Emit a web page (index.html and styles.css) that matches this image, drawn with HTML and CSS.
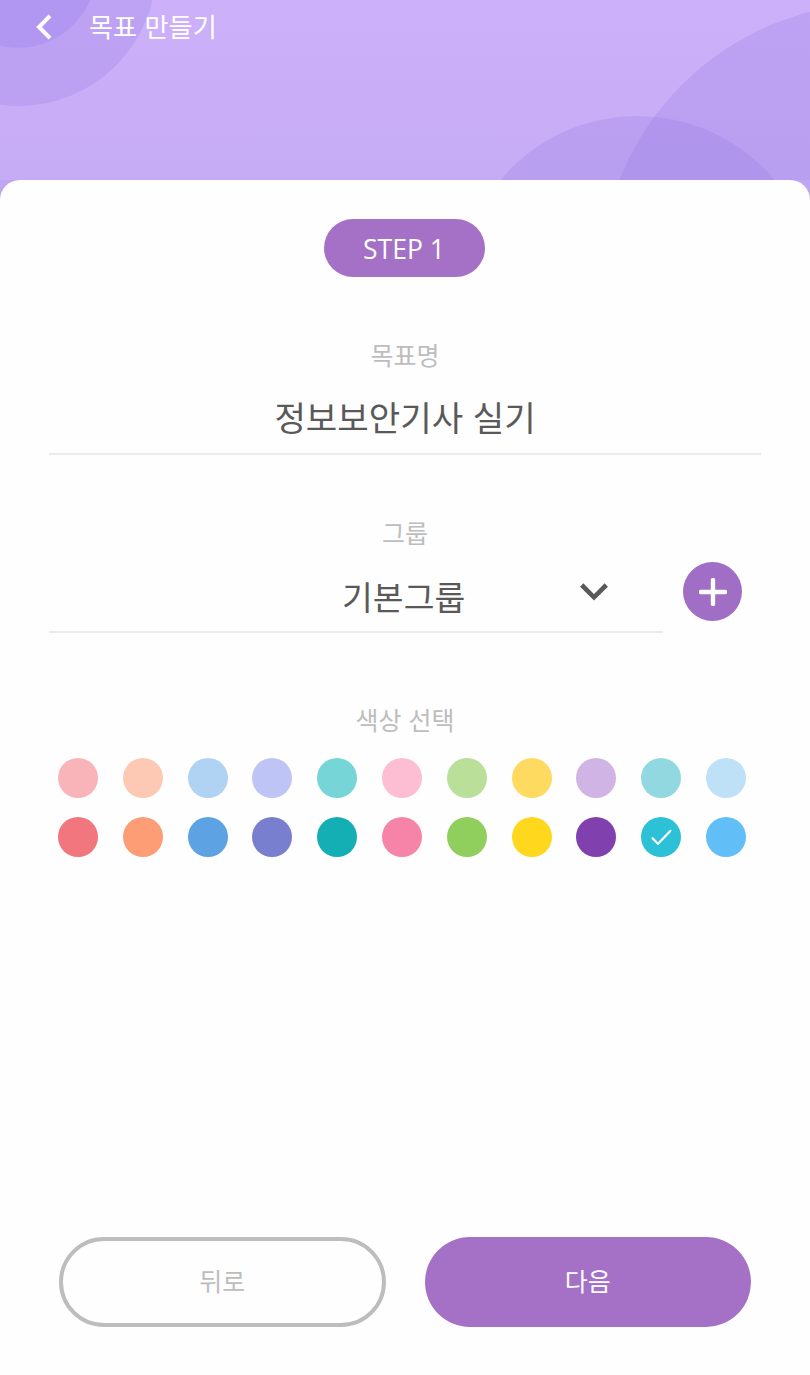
FILE: index.html
```html
<!DOCTYPE html>
<html lang="ko">
<head>
<meta charset="utf-8">
<title>목표 만들기</title>
<link rel="stylesheet" href="styles.css">
</head>
<body>
<div class="app">
  <svg class="backdrop" viewBox="0 0 810 210" aria-hidden="true">
    <defs>
      <linearGradient id="sky" x1="0" y1="0" x2="0" y2="1"><stop offset="0" stop-color="#ccb1fa"/><stop offset="1" stop-color="#c5abf4"/></linearGradient>
    </defs>
    <rect width="810" height="210" fill="url(#sky)"/>
    <g fill="#9173e0" fill-opacity=".24">
      <circle cx="18.5" cy="-31.7" r="137.7"/>
      <circle cx="18" cy="-30.8" r="78.5" fill="#987df0" fill-opacity=".31"/>
      <circle cx="879" cy="282.2" r="279"/>
      <circle cx="637.5" cy="294.6" r="178.6"/>
    </g>
    <rect y="180" width="810" height="30" fill="#c0a5f2"/>
  </svg>
  <header class="topbar">
    <svg class="back" viewBox="0 0 16 26"><path d="M14 1.8 3 13 14 24.2" fill="none" stroke="#fff" stroke-width="4"/></svg>
    <h1 class="title">목표 만들기</h1>
  </header>
  <main class="sheet">
    <div class="step"><span>STEP 1</span></div>
    <section class="field name">
      <div class="label">목표명</div>
      <div class="value">정보보안기사 실기</div>
    </section>
    <section class="group">
      <div class="label">그룹</div>
      <div class="group-row">
        <div class="select">
          <span class="group-name">기본그룹</span>
          <svg class="chevron" viewBox="0 0 28 18"><path d="m1.7 2 12.3 12.3L26.3 2" fill="none" stroke="#595959" stroke-width="4.6"/></svg>
        </div>
        <div class="add"><svg viewBox="0 0 28 28"><path d="M14 2v24M2 14h24" stroke="#fff" stroke-width="4.4" stroke-linecap="round"/></svg></div>
      </div>
    </section>
    <section class="colors">
      <div class="label">색상 선택</div>
      <div class="swatches">
        <i class="swatch" style="background:#f8b4b8"></i><i class="swatch" style="background:#fdc9b4"></i><i class="swatch" style="background:#b0d3f4"></i><i class="swatch" style="background:#bec4f6"></i><i class="swatch" style="background:#76d5d7"></i><i class="swatch" style="background:#fdbdd3"></i><i class="swatch" style="background:#b9df99"></i><i class="swatch" style="background:#ffda61"></i><i class="swatch" style="background:#d1b4e6"></i><i class="swatch" style="background:#92d8e1"></i><i class="swatch" style="background:#bfe1f7"></i>
        <i class="swatch" style="background:#f1767d"></i><i class="swatch" style="background:#fd9d75"></i><i class="swatch" style="background:#5da2e2"></i><i class="swatch" style="background:#787fcf"></i><i class="swatch" style="background:#14afb5"></i><i class="swatch" style="background:#f684a8"></i><i class="swatch" style="background:#90cf5e"></i><i class="swatch" style="background:#ffd71c"></i><i class="swatch" style="background:#8040ad"></i><i class="swatch" style="background:#2cc1d7"><svg viewBox="0 0 40 40"><path d="m11.5 21.2 5.5 5.6 12.3-12.9" fill="none" stroke="#fff" stroke-width="2.2" stroke-linecap="round" stroke-linejoin="round"/></svg></i><i class="swatch" style="background:#62bef6"></i>
      </div>
    </section>
    <footer class="actions">
      <div class="button outline">뒤로</div>
      <div class="button solid">다음</div>
    </footer>
  </main>
</div>
</body>
</html>
```
FILE: styles.css
```css
* { box-sizing: border-box; }
body {
  margin: 0;
  font-family: "Noto Sans CJK KR", sans-serif;
  font-weight: 400;
  background: #fefefe;
}
.app {
  position: relative;
  width: 810px;
  height: 1375px;
  display: flex;
  flex-direction: column;
  overflow: hidden;
}
.backdrop { position: absolute; left: 0; top: 0; width: 810px; height: 210px; }
.topbar {
  position: relative;
  height: 180px;
  padding: 7px 36px 0;
  display: flex;
  align-items: flex-start;
  gap: 37px;
}
.back { width: 16px; height: 26px; margin-top: 7px; }
.title { margin: 0; color: #fff; font-size: 26.2px; font-weight: 400; line-height: 38px; white-space: nowrap; }
.sheet {
  position: relative;
  flex: 1;
  display: flex;
  flex-direction: column;
  padding: 39px 49px 48px;
  background: #fefefe;
  border-radius: 20px 20px 0 0;
}
.step {
  align-self: center;
  width: 161px;
  height: 58px;
  margin-right: 2px;
  border-radius: 29px;
  background: #a471c7;
  color: #fff;
  font-family: "Open Sans", sans-serif;
  font-size: 26.5px;
  display: flex;
  align-items: center;
  justify-content: center;
}
.step span { padding-top: 2px; }
.label { color: #bdbdbd; font-size: 25px; line-height: 34px; text-align: center; }
.name { margin-top: 60px; border-bottom: 2px solid #ebebeb; height: 118px; }
.value { margin-top: 20px; color: #595959; font-size: 34.2px; line-height: 50px; text-align: center; }
.group { margin-top: 60px; }
.group-row { display: flex; gap: 20px; align-items: flex-start; }
.select {
  width: 614px;
  height: 84px;
  padding: 22px 55px 0 293px;
  border-bottom: 2px solid #ebebeb;
  display: flex;
  justify-content: space-between;
}
.group-name { color: #595959; font-size: 33.5px; line-height: 50px; }
.chevron { width: 28px; height: 18px; margin-top: 12px; }
.add {
  width: 59px;
  height: 59px;
  margin-top: 13px;
  border-radius: 50%;
  background: #a06ec4;
  display: grid;
  place-items: center;
}
.add svg { width: 28px; height: 28px; }
.colors { margin-top: 69px; }
.swatches {
  margin-top: 22px;
  padding: 0 15px 0 9px;
  display: grid;
  grid-template-columns: repeat(11, 40px);
  justify-content: space-between;
  row-gap: 19px;
}
.swatch { width: 40px; height: 40px; border-radius: 50%; }
.swatch svg { display: block; width: 40px; height: 40px; }
.actions { margin-top: auto; padding: 0 10px; display: grid; grid-template-columns: 1fr 1fr; gap: 39px; }
.button {
  height: 90px;
  border-radius: 45px;
  display: flex;
  align-items: center;
  justify-content: center;
  font-size: 25px;
  line-height: 36px;
  padding-bottom: 4px;
}
.outline { border: 4px solid #bdbdbd; color: #bdbdbd; }
.solid { background: #a471c7; color: #fff; }
```
